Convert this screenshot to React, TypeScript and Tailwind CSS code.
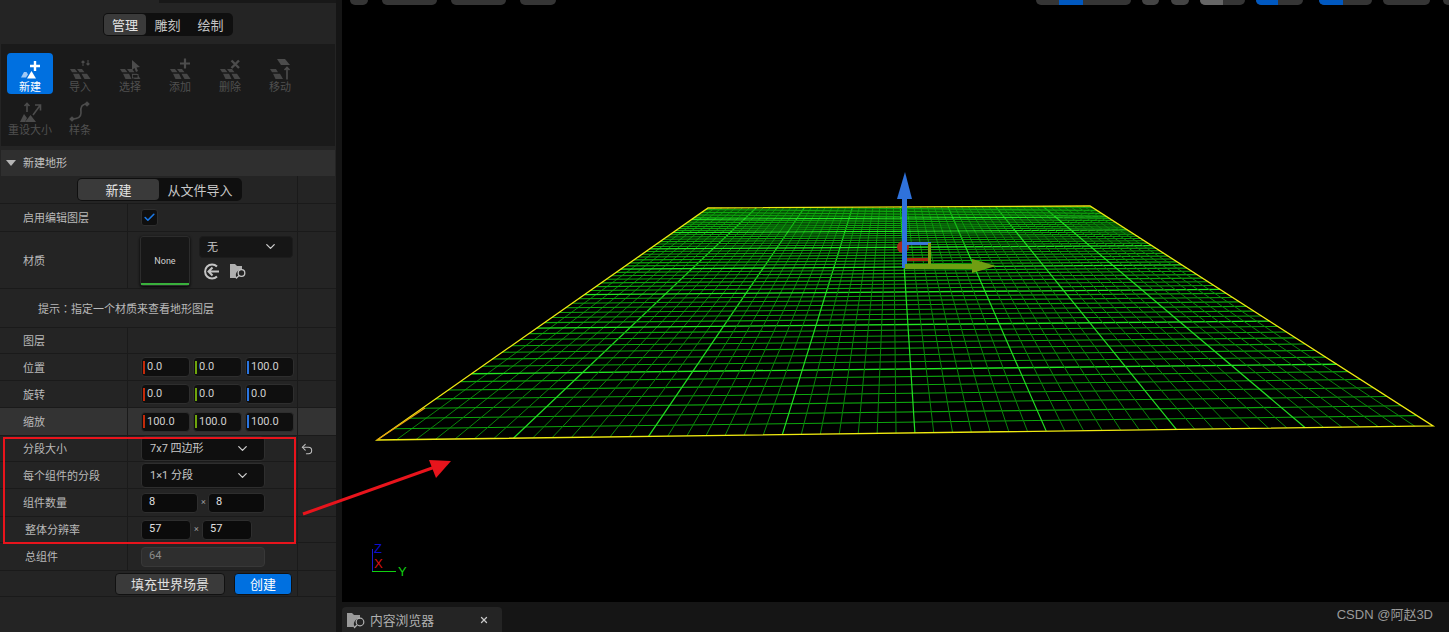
import React from 'react';
import { ChevronDown, Check, Undo2, X } from 'lucide-react';

const CJK = "font-['Noto_Sans_CJK_SC','Noto_Sans',sans-serif]";

// square -> quad homography, used to draw the landscape wireframe
function makeMapper(p0: number[], p1: number[], p2: number[], p3: number[]) {
  const dx1 = p1[0] - p2[0];
  const dx2 = p3[0] - p2[0];
  const dy1 = p1[1] - p2[1];
  const dy2 = p3[1] - p2[1];
  const sx = p0[0] - p1[0] + p2[0] - p3[0];
  const sy = p0[1] - p1[1] + p2[1] - p3[1];
  const den = dx1 * dy2 - dx2 * dy1;
  const g = (sx * dy2 - dx2 * sy) / den;
  const h = (dx1 * sy - sx * dy1) / den;
  const a = p1[0] - p0[0] + g * p1[0];
  const b = p3[0] - p0[0] + h * p3[0];
  const d = p1[1] - p0[1] + g * p1[1];
  const e = p3[1] - p0[1] + h * p3[1];
  return (u: number, v: number) => {
    const w = g * u + h * v + 1;
    return [(a * u + b * v + p0[0]) / w, (d * u + e * v + p0[1]) / w];
  };
}

const mapGrid = makeMapper([377, 440], [1433, 426], [1090, 206], [708, 208]);

function gridLines() {
  const out: React.ReactNode[] = [];
  const n = 56;
  for (let i = 1; i < n; i++) {
    const major = i % 7 === 0;
    const t = i / n;
    const [x1, y1] = mapGrid(t, 0);
    const [x2, y2] = mapGrid(t, 1);
    const [x3, y3] = mapGrid(0, t);
    const [x4, y4] = mapGrid(1, t);
    out.push(<line key={`a${i}`} x1={x1} y1={y1} x2={x2} y2={y2} stroke={major ? '#22e022' : '#0a860a'} strokeWidth={major ? 1.2 : 1} />);
    out.push(<line key={`b${i}`} x1={x3} y1={y3} x2={x4} y2={y4} stroke={major ? '#22e822' : '#0da60d'} strokeWidth={major ? 1.3 : 1.1} />);
  }
  return out;
}

function Viewport() {
  return (
    <svg viewBox="342 0 1107 602" className="block h-full w-full">
      {gridLines()}
      <polygon points="377,440 1433,426 1090,206 708,208" fill="none" stroke="#f0ea10" strokeWidth={1.3} />
      <line x1="377" y1="440" x2="425" y2="408" stroke="#e8a010" strokeWidth={1.3} />

      {/* gizmo */}
      <circle cx="903" cy="247" r="6" fill="#a8291a" />
      <rect x="906" y="258" width="23" height="3" fill="#a82a12" />
      <rect x="905" y="242" width="26" height="3" fill="#3b78d8" />
      <rect x="928" y="243" width="3" height="22" fill="#7f9a12" />
      <rect x="902" y="198" width="5" height="70" fill="#2f72dc" />
      <polygon points="905,172 912,199 897,199" fill="#2f72dc" />
      <rect x="905" y="264" width="68" height="5" fill="#6f9e12" />
      <polygon points="972,259 996,266 972,273" fill="#6f9e12" />

      {/* axis widget */}
      <line x1="372.5" y1="549" x2="372.5" y2="571" stroke="#1a1ad0" />
      <line x1="372" y1="571.5" x2="396" y2="571.5" stroke="#10d010" />
      <text x="374" y="553" fontSize="13" fontFamily="Liberation Sans" fill="#0c0cd0">Z</text>
      <text x="374" y="568" fontSize="13" fontFamily="Liberation Sans" fill="#d81010">X</text>
      <text x="398" y="576" fontSize="13" fontFamily="Liberation Sans" fill="#10d010">Y</text>
    </svg>
  );
}

function Tiles() {
  return (
    <g fill="#464646">
      <polygon points="5,14 10,14 12.5,17.3 7,17.3" />
      <polygon points="12,14 17,14 19.5,17.3 14.5,17.3" />
      <polygon points="8,18.7 14,18.7 16.5,24 10.5,24" />
      <polygon points="16.5,18.7 22,18.7 25.5,24 19.5,24" />
    </g>
  );
}

function ToolIcon({ name }: { name: string }) {
  const c = '#4c4c4c';
  return (
    <svg width="30" height="28" viewBox="0 0 30 28" fill="none" className="mt-[2px]">
      {name === 'new' && (
        <g>
          <polygon points="6,22.5 9,17 11.5,17 13,19.5 11,22.5" fill="#9fc8f5" />
          <polygon points="12,23.5 16.5,16 21,23.5" fill="#fff" />
          <path d="M15 11h10M20 6v10" stroke="#fff" strokeWidth="2.4" />
        </g>
      )}
      {name === 'import' && (
        <g>
          <Tiles />
          <path d="M18 11V6M16.5 7.5L18 6l1.5 1.5M23 5v5M21.5 8.5L23 10l1.5-1.5" stroke={c} strokeWidth="1.1" />
        </g>
      )}
      {name === 'select' && (
        <g>
          <Tiles />
          <polygon points="17,5 17,15 19.5,13 21,17 23,16 21.5,12.5 25,12" fill={c} />
          <rect x="17.5" y="19.5" width="5.5" height="3.5" fill="#1a1a1a" stroke={c} strokeWidth="0.8" />
        </g>
      )}
      {name === 'add' && (
        <g>
          <Tiles />
          <path d="M15 8.5h10M20 3.5v10" stroke={c} strokeWidth="2.2" />
        </g>
      )}
      {name === 'delete' && (
        <g>
          <Tiles />
          <path d="M16.5 5.5l7.5 7.5M24 5.5L16.5 13" stroke={c} strokeWidth="2.4" />
        </g>
      )}
      {name === 'move' && (
        <g>
          <polygon points="12,4 20,4 25,10 16,10" fill={c} />
          <polygon points="5,14 11,14 13,17.3 7,17.3" fill="#464646" />
          <polygon points="8,18.7 15,18.7 18,24 10.5,24" fill="#464646" />
          <path d="M22 24.5V12.5M19.5 15l2.5-2.5 2.5 2.5" stroke={c} strokeWidth="1.6" />
        </g>
      )}
      {name === 'resize' && (
        <g>
          <polygon points="5,24 9,16 12,20 10,24" fill={c} />
          <polygon points="10,24 15.5,17 21,24" fill={c} />
          <path d="M12 14V5.5M9.5 8L12 5.5 14.5 8M18 17l7-9.5M20 7h5.5v5.5" stroke={c} strokeWidth="1.6" />
        </g>
      )}
      {name === 'spline' && (
        <g>
          <path d="M7 21c5 0 9-1 9-6 -1-6 1-9 6-9" stroke={c} strokeWidth="1.6" />
          <rect x="5" y="19" width="4" height="4" transform="rotate(45 7 21)" fill={c} />
          <rect x="20" y="4" width="4" height="4" transform="rotate(45 22 6)" fill={c} />
        </g>
      )}
    </svg>
  );
}

const TOOLS = [
  ['new', '新建'],
  ['import', '导入'],
  ['select', '选择'],
  ['add', '添加'],
  ['delete', '删除'],
  ['move', '移动'],
  ['resize', '重设大小'],
  ['spline', '样条'],
];

function Row({ h, label, inset, hl, children, right }: {
  h: string;
  label?: string;
  inset?: boolean;
  hl?: boolean;
  children?: React.ReactNode;
  right?: React.ReactNode;
}) {
  return (
    <div className={`flex border-b border-[#1a1a1a] ${h} ${hl ? 'bg-[#333333]' : ''}`}>
      <div className={`flex w-[128px] shrink-0 items-center border-r border-[#1a1a1a] text-[11px] text-[#b9b9b9] ${inset ? 'pl-[25px]' : 'pl-[23px]'}`}>
        {label}
      </div>
      <div className="flex w-[170px] shrink-0 items-center gap-[3px] border-r border-[#1a1a1a] pl-[13px]">
        {children}
      </div>
      <div className="flex flex-1 items-center pl-[2px]">{right}</div>
    </div>
  );
}

function VecField({ color, value }: { color: string; value: string }) {
  return (
    <div className="flex h-[20px] w-[49px] items-center rounded-[4px] border border-[#2e2e2e] bg-[#0f0f0f] pl-[1px]">
      <span className={`mr-[2px] h-[13px] w-[2px] ${color}`} />
      <span className="pt-[1px] font-['Roboto',sans-serif] text-[11px] text-[#d0d0d0]">{value}</span>
    </div>
  );
}

function Vec({ values }: { values: string[] }) {
  return (
    <>
      <VecField color="bg-[#c22a0a]" value={values[0]} />
      <VecField color="bg-[#6ea50c]" value={values[1]} />
      <VecField color="bg-[#2a75e0]" value={values[2]} />
    </>
  );
}

function Combo({ text }: { text: string }) {
  return (
    <div className="flex h-[25px] w-[124px] items-center justify-between rounded-[4px] border border-[#2e2e2e] bg-[#0f0f0f] pl-[8px] pr-[14px] font-['Roboto','Noto_Sans_CJK_SC',sans-serif] text-[11px] text-[#c8c8c8]">
      <span className="pt-[2px]">{text}</span>
      <ChevronDown size={15} strokeWidth={2} color="#d0d0d0" />
    </div>
  );
}

function NumField({ w, value }: { w: string; value: string }) {
  return (
    <div className={`flex h-[20px] items-center rounded-[4px] border border-[#2e2e2e] bg-[#0b0b0b] pl-[7px] font-['Roboto',sans-serif] text-[11px] text-[#e0e0e0] ${w}`}>
      {value}
    </div>
  );
}

function Times({ w }: { w: string }) {
  return <span className={`text-center font-['Roboto',sans-serif] text-[9px] text-[#9a9a9a] ${w}`}>×</span>;
}

function Panel() {
  return (
    <div className={`flex w-[336px] shrink-0 flex-col bg-[#242424] ${CJK}`}>
      <div className="ml-[159px] h-[3px] bg-[#181818]" />

      <div className="ml-[103px] mt-[10px] flex h-[23px] w-[130px] items-center rounded-[5px] bg-[#0f0f0f] p-[1px] text-[13px] text-[#c4c4c4]">
        <div className="flex h-full w-[42px] items-center justify-center rounded-[4px] bg-[#3a3a3a] text-[#e4e4e4]">管理</div>
        <div className="flex w-[43px] justify-center">雕刻</div>
        <div className="flex w-[43px] justify-center">绘制</div>
      </div>

      <div className="mx-[1px] mt-[8px] grid h-[102px] grid-cols-[repeat(6,50px)] content-start gap-y-[2px] bg-[#1a1a1a] pl-[4px] pt-[9px]">
        {TOOLS.map(([id, text]) => (
          <div
            key={id}
            className={`flex h-[41px] flex-col items-center justify-start rounded-[4px] text-[11px] leading-[13px] ${id === 'new' ? 'mx-[2px] bg-[#0070e0] text-white' : 'text-[#505050]'}`}
          >
            <ToolIcon name={id} />
            <span className="-mt-[3px] whitespace-nowrap">{text}</span>
          </div>
        ))}
      </div>

      <div className="mx-[1px] mt-[4px] flex h-[26px] items-center bg-[#2f2f2f] pb-[2px] pl-[5px] text-[11px] text-[#c0c0c0]">
        <span className="mr-[7px] mt-[2px] h-0 w-0 border-x-[5px] border-t-[6px] border-x-transparent border-t-[#b5b5b5]" />
        新建地形
      </div>

      {/* mode switch */}
      <div className="flex h-[28px] border-b border-[#1a1a1a]">
        <div className="flex w-[298px] items-center border-r border-[#1a1a1a] pl-[77px]">
          <div className="flex h-[23px] w-[165px] items-center rounded-[5px] bg-[#0f0f0f] p-[1px] text-[13px] text-[#c8c8c8]">
            <div className="flex h-full w-[81px] items-center justify-center rounded-[4px] bg-[#3a3a3a] text-[#e4e4e4]">新建</div>
            <div className="flex flex-1 justify-center">从文件导入</div>
          </div>
        </div>
      </div>

      <Row h="h-[28px]" label="启用编辑图层">
        <div className="flex h-[17px] w-[17px] items-center justify-center rounded-[3px] border border-[#2e2e2e] bg-[#0f0f0f]">
          <Check size={13} strokeWidth={3} color="#1a78e6" />
        </div>
      </Row>

      <Row h="h-[57px]" label="材质">
        <div className="relative -ml-[1px] mt-[4px] flex h-[50px] w-[50px] items-center justify-center self-start rounded-[3px] border border-[#2c2c2c] bg-[#171717] pt-[2px] font-['Roboto',sans-serif] text-[9px] text-[#d0d0d0] shadow-[0_1px_3px_#000]">
          None
          <span className="absolute bottom-0 left-0 h-[2px] w-full bg-[#39b03c]" />
        </div>
        <div className="ml-[6px] mt-[4px] flex w-[94px] flex-col gap-[5px] self-start">
          <div className="flex h-[22px] items-center justify-between rounded-[4px] border border-[#1c1c1c] bg-[#161616] pb-[1px] pl-[7px] pr-[14px] text-[11px] text-[#c8c8c8]">
            <span>无</span>
            <ChevronDown size={15} strokeWidth={2} color="#d0d0d0" />
          </div>
          <div className="flex items-center gap-[9px] pl-[4px]">
            <svg width="17" height="17" viewBox="0 0 17 17" fill="none" stroke="#c4c4c4" strokeWidth="2">
              <path d="M14 3.5A7 7 0 1 0 14 13.5" />
              <path d="M16 8.5H6M9.5 4.5l-4 4 4 4" />
            </svg>
            <svg width="18" height="17" viewBox="0 0 18 17">
              <path d="M1 1h5l2 2h5v4a5 5 0 0 0-5 8H1z" fill="#b0b0b0" />
              <circle cx="12.5" cy="10" r="3.3" fill="none" stroke="#c4c4c4" strokeWidth="1.3" />
              <path d="M10 12.5l-3 3" stroke="#c4c4c4" strokeWidth="1.3" />
            </svg>
          </div>
        </div>
      </Row>

      <div className="flex h-[39px] border-b border-[#1a1a1a]">
        <div className="flex w-[298px] items-center border-r border-[#1a1a1a] pl-[38px] font-['Noto_Sans_CJK_TC',sans-serif] text-[11px] text-[#b9b9b9]">
          提示：指定一个材质来查看地形图层
        </div>
      </div>

      <Row h="h-[26px]" label="图层" />
      <Row h="h-[27px]" label="位置"><Vec values={['0.0', '0.0', '100.0']} /></Row>
      <Row h="h-[27px]" label="旋转"><Vec values={['0.0', '0.0', '0.0']} /></Row>
      <Row h="h-[28px]" label="缩放" hl><Vec values={['100.0', '100.0', '100.0']} /></Row>
      <Row h="h-[26px]" label="分段大小" right={<Undo2 size={14} strokeWidth={1.8} color="#c0c0c0" />}>
        <Combo text="7x7 四边形" />
      </Row>
      <Row h="h-[27px]" label="每个组件的分段"><Combo text="1×1 分段" /></Row>
      <Row h="h-[28px]" label="组件数量">
        <NumField w="w-[57px]" value="8" />
        <Times w="w-[4px]" />
        <NumField w="w-[57px]" value="8" />
      </Row>
      <Row h="h-[26px]" label="整体分辨率" inset>
        <NumField w="w-[50px]" value="57" />
        <Times w="w-[5px]" />
        <NumField w="w-[50px]" value="57" />
      </Row>
      <Row h="h-[28px]" label="总组件" inset>
        <div className="flex h-[20px] w-[124px] items-center rounded-[4px] border border-[#383838] bg-[#2e2e2e] pl-[7px] font-['Roboto',sans-serif] text-[11px] text-[#8a8a8a]">
          64
        </div>
      </Row>

      <div className="flex h-[26px] border-b border-[#1a1a1a]">
        <div className="flex w-[298px] items-center justify-end gap-[9px] border-r border-[#1a1a1a] pr-[5px] text-[13px]">
          <div className="flex h-[22px] w-[110px] items-center justify-center rounded-[4px] border border-[#111111] bg-[#3a3a3a] text-[#e0e0e0]">填充世界场景</div>
          <div className="flex h-[22px] w-[58px] items-center justify-center rounded-[4px] border border-[#111111] bg-[#0070e0] text-white">创建</div>
        </div>
      </div>
    </div>
  );
}

const PILLS_LEFT = ['w-[18px]', 'w-[55px]', 'w-[55px]', 'w-[36px]'];

function TopPills() {
  return (
    <div className="absolute left-0 right-0 top-0 flex h-[5px]">
      <div className="ml-[8px] flex gap-[14px]">
        {PILLS_LEFT.map((w, i) => (
          <div key={i} className={`h-[5px] rounded-b-[5px] bg-[#353535] ${w}`} />
        ))}
      </div>
      <div className="ml-auto flex gap-[11px]">
        <div className="flex h-[5px] w-[95px] overflow-hidden rounded-b-[5px] bg-[#353535]">
          <div className="ml-[23px] w-[24px] bg-[#0058c0]" />
        </div>
        <div className="h-[5px] w-[17px] rounded-b-[5px] bg-[#444444]" />
        <div className="ml-[1px] h-[5px] w-[18px] rounded-b-[5px] bg-[#444444]" />
        <div className="flex h-[5px] w-[45px] overflow-hidden rounded-b-[5px] bg-[#353535]">
          <div className="w-[23px] bg-[#666666]" />
        </div>
        <div className="flex h-[5px] w-[47px] overflow-hidden rounded-b-[5px] bg-[#353535]">
          <div className="w-[22px] bg-[#0058c0]" />
        </div>
        <div className="ml-[5px] flex h-[5px] w-[53px] overflow-hidden rounded-b-[5px] bg-[#353535]">
          <div className="w-[24px] bg-[#0058c0]" />
        </div>
        <div className="h-[5px] w-[47px] rounded-b-[5px] bg-[#353535]" />
        <div className="ml-[2px] h-[5px] w-[6px] rounded-bl-[5px] bg-[#353535]" />
      </div>
    </div>
  );
}

function BottomStrip() {
  return (
    <div className={`flex h-[30px] shrink-0 items-end bg-[#151515] ${CJK}`}>
      <div className="flex h-[25px] w-[160px] items-center rounded-t-[4px] bg-[#242424] pl-[5px] text-[12.8px] text-[#b0b0b0]">
        <svg width="20" height="18" viewBox="0 0 20 18" className="mr-[3px]">
          <path d="M0 2h5l2 2h6v4a5 5 0 0 0-5 8H0z" fill="#9a9a9a" />
          <circle cx="13" cy="11" r="3.8" fill="none" stroke="#b0b0b0" strokeWidth="1.2" />
          <path d="M10 14l-3 3" stroke="#b0b0b0" strokeWidth="1.2" />
        </svg>
        内容浏览器
        <X size={10} strokeWidth={3} color="#c8c8c8" className="ml-[45px]" />
      </div>
      <div className="mb-[4px] ml-auto self-center pr-[16px] font-['Liberation_Sans','Noto_Sans_CJK_SC',sans-serif] text-[13px] text-[#9a9a9a]">
        CSDN @阿赵3D
      </div>
    </div>
  );
}

export default function App() {
  return (
    <div className="relative flex h-[632px] w-[1449px] overflow-hidden bg-[#151515]">
      <Panel />
      <div className="ml-[6px] flex min-w-0 flex-1 flex-col">
        <div className="relative h-[602px] bg-black">
          <Viewport />
          <TopPills />
        </div>
        <BottomStrip />
      </div>

      {/* red annotation painted over the screenshot */}
      <div className="pointer-events-none absolute left-[3px] top-[437px] h-[107px] w-[293px] border-2 border-[#e8141c]" />
      <svg className="pointer-events-none absolute left-0 top-0" width="1449" height="632" viewBox="0 0 1449 632">
        <line x1="303" y1="514" x2="435" y2="467" stroke="#e8141c" strokeWidth="3" />
        <polygon points="451,461 429,460 436,478" fill="#e8141c" />
      </svg>
    </div>
  );
}
